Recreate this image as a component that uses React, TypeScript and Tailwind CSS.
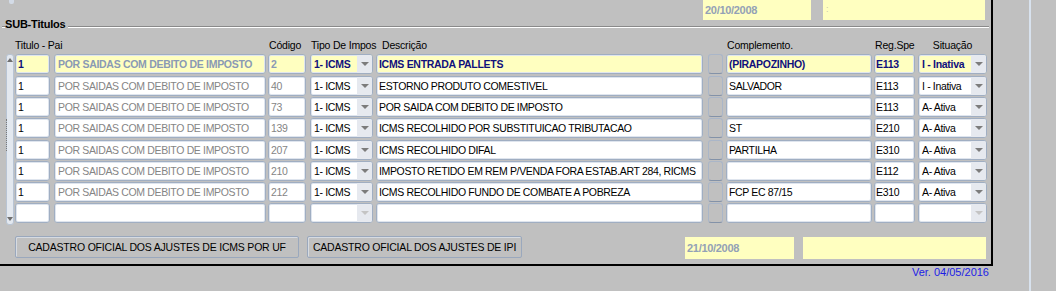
import clsx from "clsx";

type Row = {
  t: string;
  pai: string;
  cod: string;
  tipo: string;
  desc: string;
  comp: string;
  reg: string;
  sit: string;
  sel?: boolean;
};

const PAI = "POR SAIDAS COM DEBITO DE IMPOSTO";

const rows: Row[] = [
  { t: "1", pai: PAI, cod: "2", tipo: "1- ICMS", desc: "ICMS ENTRADA PALLETS", comp: "(PIRAPOZINHO)", reg: "E113", sit: "I - Inativa", sel: true },
  { t: "1", pai: PAI, cod: "40", tipo: "1- ICMS", desc: "ESTORNO PRODUTO COMESTIVEL", comp: "SALVADOR", reg: "E113", sit: "I - Inativa" },
  { t: "1", pai: PAI, cod: "73", tipo: "1- ICMS", desc: "POR SAIDA COM DEBITO DE IMPOSTO", comp: "", reg: "E113", sit: "A- Ativa" },
  { t: "1", pai: PAI, cod: "139", tipo: "1- ICMS", desc: "ICMS RECOLHIDO POR SUBSTITUICAO TRIBUTACAO", comp: "ST", reg: "E210", sit: "A- Ativa" },
  { t: "1", pai: PAI, cod: "207", tipo: "1- ICMS", desc: "ICMS RECOLHIDO DIFAL", comp: "PARTILHA", reg: "E310", sit: "A- Ativa" },
  { t: "1", pai: PAI, cod: "210", tipo: "1- ICMS", desc: "IMPOSTO RETIDO EM REM P/VENDA FORA ESTAB.ART 284, RICMS", comp: "", reg: "E112", sit: "A- Ativa" },
  { t: "1", pai: PAI, cod: "212", tipo: "1- ICMS", desc: "ICMS RECOLHIDO FUNDO DE COMBATE A POBREZA", comp: "FCP EC 87/15", reg: "E310", sit: "A- Ativa" },
  { t: "", pai: "", cod: "", tipo: "", desc: "", comp: "", reg: "", sit: "" },
];

const field =
  "h-[20px] shrink-0 overflow-hidden whitespace-nowrap rounded-[3px] border border-[#a0aec2] leading-[18px] shadow-[inset_0_0_0_1px_#dfe5ee]";

function Field({ className, sel, muted, children }: { className: string; sel?: boolean; muted?: boolean; children?: React.ReactNode }) {
  return (
    <div
      className={clsx(
        field,
        className,
        sel ? "bg-[#ffffc0]" : "bg-white",
        sel && muted && "font-bold tracking-[-0.3px] text-[#8a9ab4]",
        sel && !muted && "font-bold tracking-[-0.3px] text-[#10107c]",
        !sel && muted && "text-[#858585]",
      )}
    >
      {children}
    </div>
  );
}

function Combo({ className, sel, value, empty }: { className: string; sel?: boolean; value: string; empty?: boolean }) {
  return (
    <div
      className={clsx(
        field,
        className,
        "flex",
        sel ? "bg-[#ffffc0] font-bold tracking-[-0.3px] text-[#10107c]" : "bg-white",
      )}
    >
      <div className="flex-1 overflow-hidden pl-[3px]">{value}</div>
      <div className="flex w-[15px] items-center justify-center bg-[#e6e9ef]">
        <div
          className={clsx(
            "h-0 w-0 border-x-[4px] border-t-[4px] border-x-transparent",
            empty ? "border-t-[#c4c4c4]" : "border-t-[#7c7c7c]",
          )}
        />
      </div>
    </div>
  );
}

function GridRow({ r, i }: { r: Row; i: number }) {
  const empty = r.t === "";
  return (
    <div className={clsx("flex", i === 1 || i === 4 ? "mt-[2px]" : i === 0 ? "" : "mt-[1px]")}>
      <Field className="w-[35px] pl-[2px]" sel={r.sel}>{r.t}</Field>
      <Field className="ml-[4px] w-[212px] pl-[3px]" sel={r.sel} muted>{r.pai}</Field>
      <Field className="ml-[2px] w-[38px] pl-[2px]" sel={r.sel} muted>{r.cod}</Field>
      <Combo className="ml-[4px] w-[63px]" sel={r.sel} value={r.tipo} empty={empty} />
      <Field className="ml-[3px] w-[327px] pl-[2px]" sel={r.sel}>{r.desc}</Field>
      <div className="ml-[5px] h-[20px] w-[15px] shrink-0 rounded-[3px] border border-[#aab6c8] border-b-[#8392a8] bg-[#c0c0c0]" />
      <Field className="ml-[3px] w-[146px] pl-[2px]" sel={r.sel}>{r.comp}</Field>
      <Field className="ml-[2px] w-[41px] pl-[1px]" sel={r.sel}>{r.reg}</Field>
      <Combo className="ml-[3px] w-[69px]" sel={r.sel} value={r.sit} empty={empty} />
    </div>
  );
}

export default function App() {
  return (
    <div className="flex h-[291px] w-[1056px] overflow-hidden bg-[#c0c0c0] font-['Liberation_Sans',Arial,sans-serif] text-[10.5px] tracking-[-0.35px] text-black">
      <div className="flex w-[993px] shrink-0 flex-col">
        <div className="flex h-[266px] flex-col border-r-2 border-b-2 border-black">
          {/* top dates */}
          <div className="flex h-[20px] pr-[6px]">
            <div className="ml-[9px] h-[4px] w-[5px] rounded-b-[2px] bg-[#d3dbe7]" />
            <div className="ml-auto w-[108px] bg-[#ffffc0] pl-[2px] text-[11px] font-bold leading-[20px] tracking-[-0.3px] text-[#93a1b6]">
              20/10/2008
            </div>
            <div className="ml-[12px] w-[162px] bg-[#ffffc0] pl-[3px] text-[9px] leading-[18px] text-[#c9c9a8]">:</div>
          </div>

          {/* group title */}
          <div className="-mt-[2px] flex h-[14px] items-start pr-[2px]">
            <div className="ml-[2px] mt-[8px] h-[2px] w-[3px] border-t border-b border-t-[#8a8a8a] border-b-white" />
            <span className="text-[11px] font-bold leading-[13px] tracking-[-0.2px]">SUB-Titulos</span>
            <div className="mt-[8px] ml-[2px] h-[2px] flex-1 border-t border-b border-t-[#8a8a8a] border-b-white" />
          </div>

          {/* column labels */}
          <div className="mt-[5px] flex h-[16px] whitespace-nowrap pl-[15px] leading-[16px] tracking-[-0.2px]">
            <div className="w-[253px]">Titulo - Pai</div>
            <div className="w-[42px] pl-[1px]">Código</div>
            <div className="w-[67px] overflow-hidden pl-[1px]">Tipo De Impos</div>
            <div className="w-[350px] pl-[5px]">Descrição</div>
            <div className="w-[147px]">Complemento.</div>
            <div className="w-[44px] pl-[1px]">Reg.Spe</div>
            <div className="w-[69px] text-center">Situação</div>
          </div>

          {/* grid */}
          <div className="mt-[1px] flex pl-[6px]">
            <div className="relative flex h-[171px] w-[8px] flex-col items-center justify-between rounded-[3px] border border-[#b8c4d4] bg-[#e3e8ef] py-[3px]">
              <div className="h-0 w-0 border-x-[3px] border-b-[4px] border-x-transparent border-b-[#6e6e6e]" />
              <div className="absolute top-[64px] -left-[1px] h-[32px] border-l border-dotted border-[#7a7a7a]" />
              <div className="h-0 w-0 border-x-[3px] border-t-[4px] border-x-transparent border-t-[#6e6e6e]" />
            </div>
            <div className="ml-[1px] flex flex-col">
              {rows.map((r, i) => (
                <GridRow key={i} r={r} i={i} />
              ))}
            </div>
          </div>

          {/* buttons + dates */}
          <div className="mt-[11px] flex items-start pl-[15px]">
            <button className="h-[22px] w-[284px] rounded-[2px] border border-[#9aa8bd] bg-[#c0c0c0] leading-[20px] tracking-[-0.2px] text-black shadow-[inset_1px_1px_0_#d6dbe2]">
              CADASTRO OFICIAL DOS AJUSTES DE ICMS POR UF
            </button>
            <button className="ml-[8px] h-[22px] w-[215px] whitespace-nowrap rounded-[2px] border border-[#9aa8bd] bg-[#c0c0c0] leading-[20px] tracking-[-0.2px] text-black shadow-[inset_1px_1px_0_#d6dbe2]">
              CADASTRO OFICIAL DOS AJUSTES DE IPI
            </button>
            <div className="mt-[1px] ml-[163px] h-[22px] w-[109px] bg-[#ffffc0] pl-[2px] text-[11px] font-bold leading-[22px] tracking-[-0.3px] text-[#93a1b6]">
              21/10/2008
            </div>
            <div className="mt-[1px] ml-[9px] h-[22px] w-[183px] bg-[#ffffc0]" />
          </div>
        </div>
        <div className="pr-[4px] text-right text-[11px] leading-[12px] tracking-normal text-[#1c1ce6]">Ver. 04/05/2016</div>
      </div>
      <div className="ml-[36px] w-[2px] bg-[#d8e2ee]" />
    </div>
  );
}
